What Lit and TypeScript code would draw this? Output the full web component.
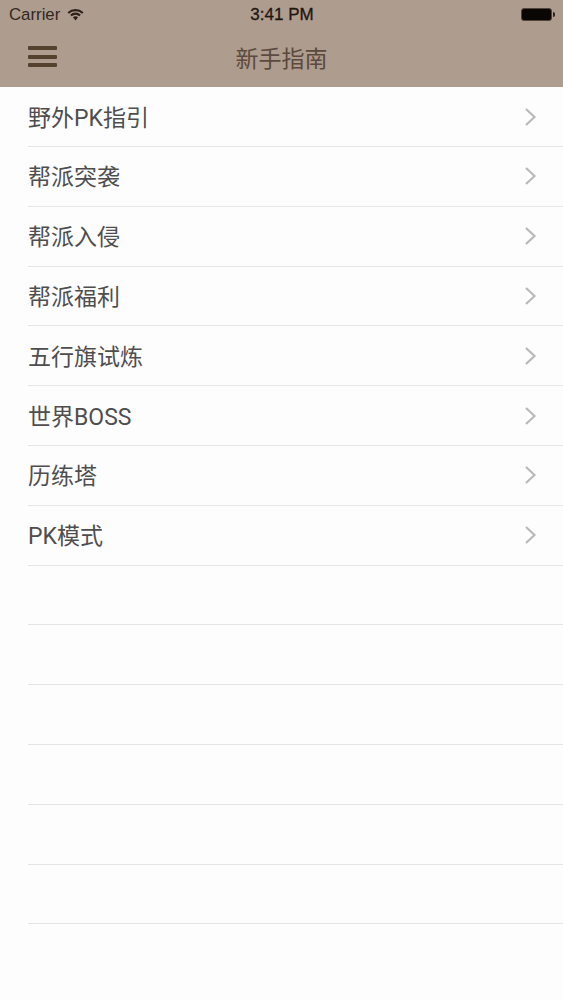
import { LitElement, html, css, svg } from "lit";
import { customElement } from "lit/decorators.js";

const ITEMS = ["野外PK指引", "帮派突袭", "帮派入侵", "帮派福利", "五行旗试炼", "世界BOSS", "历练塔", "PK模式", "", "", "", "", "", ""];

@customElement("app-root")
export class AppRoot extends LitElement {
  static styles = css`
    :host { display: block; height: 1000px; overflow: hidden; background: #fefdfe; font-family: Roboto, "Noto Sans CJK SC", sans-serif; }
    .header { height: 87.3px; background: #ae9c8e; box-sizing: border-box; display: flex; flex-direction: column; }
    .status { height: 29px; display: grid; grid-template-columns: 1fr auto 1fr; align-items: center; padding: 0 8px 0 9px; color: #2c211a; font-size: 16.8px; font-family: "Liberation Sans", sans-serif; }
    .carrier { display: flex; align-items: center; gap: 7px; color: #33281f; }
    .time { font-size: 17px; color: #1f1611; -webkit-text-stroke: 0.3px #1f1611; }
    .batt-wrap { justify-self: end; display: flex; align-items: center; gap: 1px; }
    .batt { width: 31px; height: 13px; box-sizing: border-box; background: #0a0604; border: 1px solid #50443b; border-radius: 3px; }
    .nub { width: 2px; height: 5px; background: #2a211b; border-radius: 0 2px 2px 0; }
    .nav { flex: 1; display: grid; grid-template-columns: 1fr auto 1fr; align-items: center; padding: 0 28px 3px; }
    .menu { display: flex; flex-direction: column; gap: 4.5px; width: 29px; }
    .menu span { height: 4px; border-radius: 1px; background: #54422f; }
    .title { font-size: 23px; color: #5b4a3d; }
    .list { display: grid; grid-auto-rows: 59.8px; padding-left: 28px; }
    .row { display: flex; align-items: center; justify-content: space-between; padding: 0 26px 0 0; border-bottom: 1px solid #e6e4e6; box-sizing: border-box; font-size: 23px; color: #4e4e4e; }
    .label { position: relative; top: -1px; }
    svg { display: block; }
  `;

  render() {
    return html`
      <div class="header">
        <div class="status">
          <div class="carrier">Carrier
            <svg width="17" height="13" viewBox="0 0 17 13"><path d="M8.5 12.5 L5.9 9.3 A4 4 0 0 1 11.1 9.3 Z M8.5 1 A12 12 0 0 0 0.5 4.2 L1.9 5.8 A10 10 0 0 1 15.1 5.8 L16.5 4.2 A12 12 0 0 0 8.5 1 Z M8.5 4.6 A8 8 0 0 0 3.2 6.8 L4.6 8.3 A6 6 0 0 1 12.4 8.3 L13.8 6.8 A8 8 0 0 0 8.5 4.6 Z" fill="#2c211a"/></svg>
          </div>
          <div class="time">3:41 PM</div>
          <div class="batt-wrap"><div class="batt"></div><div class="nub"></div></div>
        </div>
        <div class="nav">
          <div class="menu"><span></span><span></span><span></span></div>
          <div class="title">新手指南</div>
          <div></div>
        </div>
      </div>
      <div class="list">
        ${ITEMS.map(t => html`<div class="row"><span class="label">${t}</span>${t ? svg`<svg width="13" height="20" viewBox="0 0 13 20"><path d="M2 2 L10.5 10 L2 18" fill="none" stroke="#b9b9bb" stroke-width="2.2"/></svg>` : ""}</div>`)}
      </div>
    `;
  }
}
